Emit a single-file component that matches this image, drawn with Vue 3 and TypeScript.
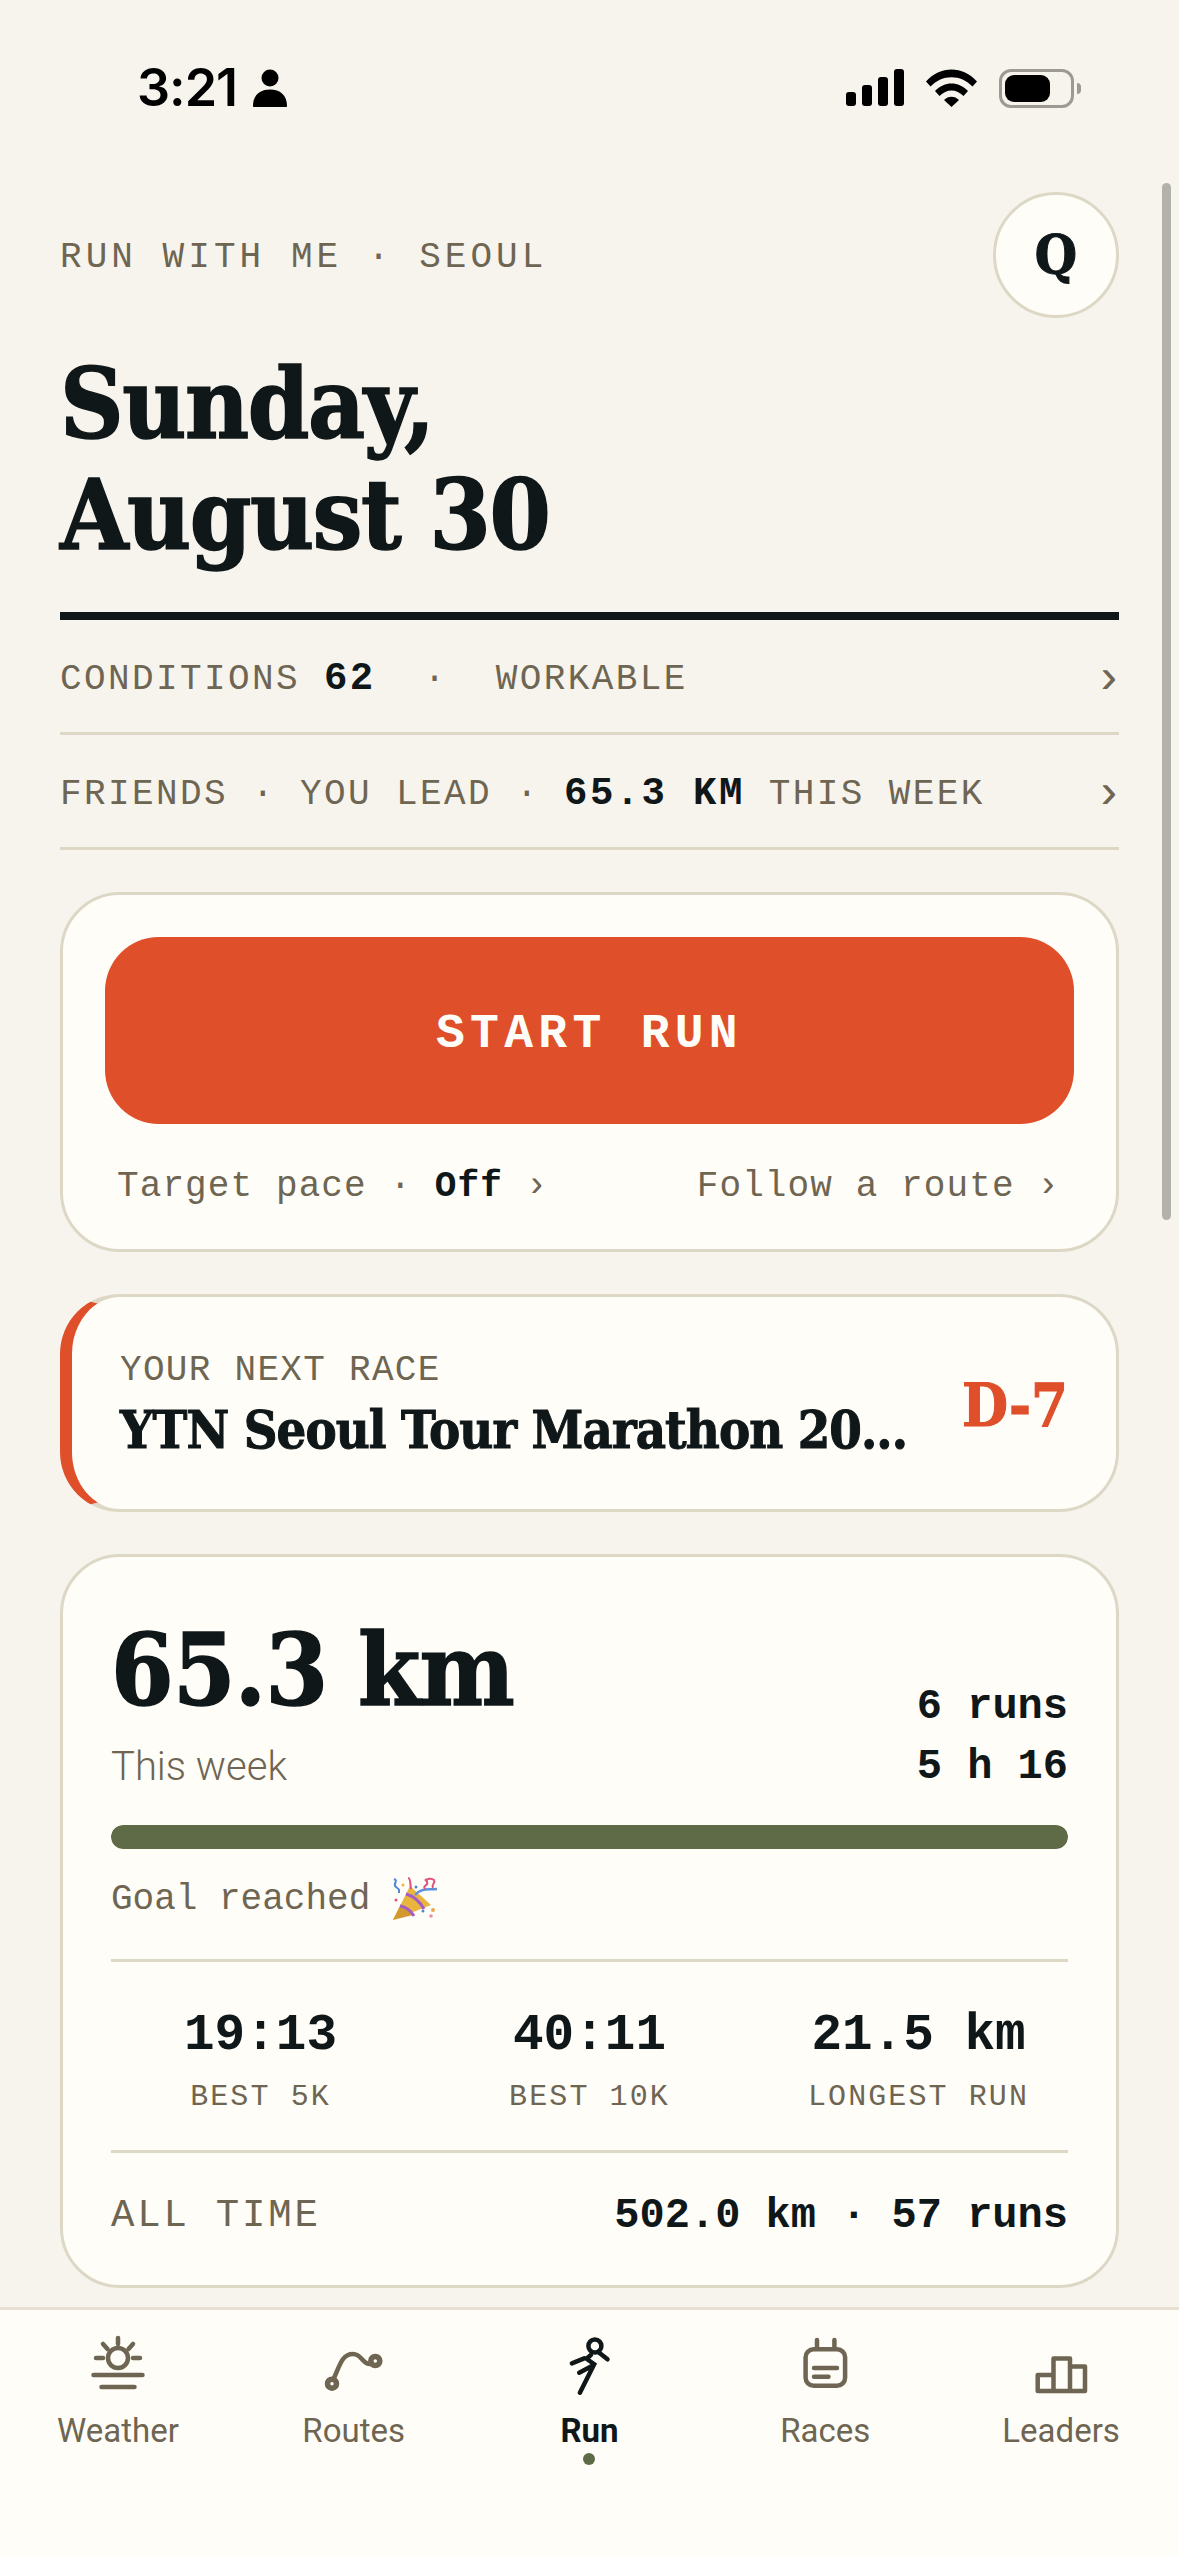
<template>
  <div class="app">
    <header class="status-bar">
      <div class="status-bar__left">
        <span class="status-bar__time">3:21</span>
        <svg class="status-bar__person" width="34" height="38" viewBox="0 0 34 38">
          <circle cx="17" cy="9" r="8.5" fill="#000" />
          <path d="M0 37c0-11 7-16.500 17-16.500S34 26 34 37c0 .6-.4 1-1 1H1c-.6 0-1-.4-1-1z" fill="#000" />
        </svg>
      </div>
      <div class="status-bar__right">
        <svg width="58" height="38" viewBox="0 0 58 38">
          <rect x="0" y="23" width="10" height="14" rx="3" fill="#000" />
          <rect x="16" y="16" width="10" height="21" rx="3" fill="#000" />
          <rect x="32" y="8" width="10" height="29" rx="3" fill="#000" />
          <rect x="48" y="0" width="10" height="37" rx="3" fill="#000" />
        </svg>
        <svg class="status-bar__wifi" width="51" height="38" viewBox="0 0 51 38">
          <path d="M0 12.500C14-3.500 37-3.500 51 12.500l-4.500 5C35 5 16 5 4.500 17.500z" fill="#000" />
          <path d="M9 22c9.500-10 23.500-10 33 0l-4.500 5c-7-7.500-17-7.500-24 0z" fill="#000" />
          <path d="M18 31c4-4.500 11-4.500 15 0l-7.500 7z" fill="#000" />
        </svg>
        <div class="battery">
          <div class="battery__shell"><div class="battery__level" /></div>
          <div class="battery__nub" />
        </div>
      </div>
    </header>

    <main class="content">
      <div class="topline">
        <span class="eyebrow">RUN WITH ME · SEOUL</span>
        <div class="avatar serif">Q</div>
      </div>

      <h1 class="title serif">Sunday,<br />August 30</h1>

      <div class="rows">
        <div class="row">
          <span class="row__text">CONDITIONS <b>62</b>&nbsp;&nbsp;·&nbsp;&nbsp;WORKABLE</span>
          <span class="row__chev">›</span>
        </div>
        <div class="row">
          <span class="row__text">FRIENDS · YOU LEAD · <b>65.3 KM</b> THIS WEEK</span>
          <span class="row__chev">›</span>
        </div>
      </div>

      <section class="card card--start">
        <button class="start-btn">START RUN</button>
        <div class="start-links">
          <span>Target pace · <b>Off</b> ›</span>
          <span>Follow a route ›</span>
        </div>
      </section>

      <section class="card card--race">
        <div class="race__body">
          <div class="race__label">YOUR NEXT RACE</div>
          <div class="race__name serif">YTN Seoul Tour Marathon 20...</div>
        </div>
        <div class="race__days serif">D-7</div>
      </section>

      <section class="card card--stats">
        <div class="week">
          <div>
            <div class="week__km serif">65.3 km</div>
            <div class="week__label">This week</div>
          </div>
          <div class="week__side">
            <div>6 runs</div>
            <div>5 h 16</div>
          </div>
        </div>

        <div class="bar"><div class="bar__fill" :style="{ width: goalPct + '%' }" /></div>
        <div class="goal">
          <span>Goal reached</span>
          <svg class="goal__icon" width="48" height="46" viewBox="12 12 48 46">
            <path d="M14 56l17-34 21 19z" fill="#e9b53f" />
            <path d="M14 56l8-16 12 11z" fill="#d29a2e" />
            <path d="M21 42c6 1 11 5 14 10M27 30c7 2 14 8 18 15" fill="none" stroke="#a45cc4" stroke-width="3" />
            <path d="M36 31c6-7 12-5 22-6" fill="none" stroke="#5b92dc" stroke-width="2.500" />
            <path d="M15 15c5 2-2 5 2 8s3 3 3 6" fill="none" stroke="#4f86d6" stroke-width="2" />
            <path d="M29 14c3 0 2 6 3 11M46 25c-3-4 4-3 2-7s5-4 7-2c2 3-3 4-1 8" fill="none" stroke="#e0527f" stroke-width="2" />
            <circle cx="24" cy="21" r="1.500" fill="#e9b53f" />
            <circle cx="37" cy="23" r="1.500" fill="#4f86d6" />
            <circle cx="17" cy="36" r="1.500" fill="#e0527f" />
            <circle cx="44" cy="47" r="1.500" fill="#4f86d6" />
            <circle cx="54" cy="46" r="2" fill="#e9a84f" />
            <circle cx="52" cy="52" r="1.800" fill="#eb8fa8" />
            <circle cx="47" cy="16" r="1.500" fill="#e0527f" />
          </svg>
        </div>

        <div class="bests">
          <div v-for="item in bests" :key="item.label" class="best">
            <div class="best__value">{{ item.value }}</div>
            <div class="best__label">{{ item.label }}</div>
          </div>
        </div>

        <div class="alltime">
          <span class="alltime__label">ALL TIME</span>
          <span class="alltime__value">502.0 km · 57 runs</span>
        </div>
      </section>

      <div class="scrollbar" />
    </main>

    <nav class="tabs">
      <div class="tab">
        <svg class="tab__icon" width="72" height="72" viewBox="0 0 72 72">
          <circle cx="36" cy="27" r="10" />
          <path d="M36 7v6M14 27h7M51 27h7M21 13l4.500 5M51 13l-4.500 5M11.500 44h49M19.500 56h33" />
        </svg>
        <span>Weather</span>
      </div>
      <div class="tab">
        <svg class="tab__icon" width="72" height="72" viewBox="0 0 72 72">
          <circle cx="14" cy="52.700" r="4.500" stroke-width="5.500" />
          <circle cx="57.300" cy="30" r="4.500" stroke-width="5.500" />
          <path d="M16 47C22 34 24 23 35 23C44 23 44 33 52 33" />
        </svg>
        <span>Routes</span>
      </div>
      <div class="tab tab--active">
        <svg class="tab__icon" width="72" height="72" viewBox="0 0 72 72">
          <circle cx="41.900" cy="15" r="6.500" />
          <path d="M46.200 21.700L54.500 28.300M37.900 24L33.500 27.700L41.200 33.300L26.900 61.700M18.900 32.300L31.200 27.300M26.200 41.700L38.900 35" />
        </svg>
        <span>Run</span>
        <i class="tab__dot" />
      </div>
      <div class="tab">
        <svg class="tab__icon" width="72" height="72" viewBox="0 0 72 72">
          <rect x="16.600" y="18.200" width="39.500" height="36.500" rx="8" />
          <path d="M28 9v7M45.400 9v7M25 37h23M25 45.700h14.500" />
        </svg>
        <span>Races</span>
      </div>
      <div class="tab">
        <svg class="tab__icon" width="72" height="72" viewBox="0 0 72 72">
          <path d="M12.700 44H28.500V27.500H45V35.500H60V60H12.700ZM28.500 44V60M45 35.500V60" stroke-linejoin="round" stroke-linecap="butt" />
        </svg>
        <span>Leaders</span>
      </div>
    </nav>
  </div>
</template>

<script setup lang="ts">
const goalPct = 100

const bests = [
  { value: '19:13', label: 'BEST 5K' },
  { value: '40:11', label: 'BEST 10K' },
  { value: '21.5 km', label: 'LONGEST RUN' }
]
</script>

<style>
html,
body {
  margin: 0;
  background: #f7f4ee;
}
</style>

<style scoped>
.app {
  width: 1179px;
  height: 2556px;
  display: flex;
  flex-direction: column;
  overflow: hidden;
  background: #f7f4ee;
  color: #0f1719;
  font-family: 'Liberation Mono', monospace;
}
.serif {
  font-family: 'DejaVu Serif', serif;
  font-stretch: condensed;
  font-weight: 700;
  -webkit-text-stroke: 1px currentColor;
}

.status-bar {
  height: 88px;
  padding: 44px 98px 0 137px;
  display: flex;
  align-items: center;
  justify-content: space-between;
  flex-shrink: 0;
}
.status-bar__left,
.status-bar__right {
  display: flex;
  align-items: center;
}
.status-bar__time {
  font-family: Inter, sans-serif;
  font-size: 52px;
  font-weight: 600;
  letter-spacing: -1px;
  color: #000;
  line-height: 1;
}
.status-bar__person {
  margin-left: 16px;
}
.status-bar__wifi {
  margin-left: 22px;
}
.battery {
  margin-left: 22px;
  display: flex;
  align-items: center;
}
.battery__shell {
  width: 75px;
  height: 39px;
  box-sizing: border-box;
  border: 3px solid #9b9a93;
  border-radius: 12px;
  padding: 3px;
}
.battery__level {
  width: 45px;
  height: 100%;
  background: #000;
  border-radius: 9px;
}
.battery__nub {
  width: 4px;
  height: 11px;
  margin-left: 3px;
  background: #9b9a93;
  border-radius: 0 4px 4px 0;
}

.content {
  position: relative;
  flex: 1;
  min-height: 0;
  padding: 60px 60px 0;
}
.topline {
  display: flex;
  align-items: center;
  justify-content: space-between;
}
.eyebrow {
  margin-top: 5px;
  font-size: 36px;
  letter-spacing: 4.05px;
  color: #6e6552;
}
.avatar {
  width: 126px;
  height: 126px;
  box-sizing: border-box;
  border: 3px solid #ddd8c6;
  border-radius: 50%;
  background: #fffdf8;
  display: flex;
  align-items: center;
  justify-content: center;
  font-size: 54px;
}

.title {
  margin: 30px 0 0;
  font-size: 98px;
  line-height: 111px;
  letter-spacing: -1.4px;
  -webkit-text-stroke-width: 1.5px;
}

.rows {
  margin-top: 42px;
  border-top: 8px solid #0f1719;
}
.row {
  height: 115px;
  padding-top: 5px;
  box-sizing: border-box;
  border-bottom: 3px solid #ddd8c6;
  display: flex;
  align-items: center;
  justify-content: space-between;
  font-size: 36px;
  color: #6e6552;
}
.row__text {
  letter-spacing: 2.4px;
  white-space: nowrap;
}
.row__text b {
  font-size: 39px;
  color: #0f1719;
}
.row__chev {
  margin-right: -4px;
  font-size: 48px;
  line-height: 1;
}

.card {
  box-sizing: border-box;
  background: #fffdf8;
  border: 3px solid #ddd8c6;
  border-radius: 60px;
}
.card--start {
  margin-top: 42px;
  padding: 42px 42px 40px;
}
.start-btn {
  display: block;
  width: 100%;
  height: 187px;
  padding: 6px 0 0;
  border: 0;
  border-radius: 54px;
  background: #de4f2a;
  color: #fffdf8;
  font-family: inherit;
  font-size: 48px;
  font-weight: 700;
  letter-spacing: 5.3px;
}
.start-links {
  height: 45px;
  margin-top: 40px;
  padding: 0 14px 0 12px;
  display: flex;
  align-items: center;
  justify-content: space-between;
  font-size: 36px;
  letter-spacing: 1.1px;
  color: #6e6552;
}
.start-links b {
  color: #0f1719;
}

.card--race {
  margin-top: 42px;
  height: 218px;
  padding: 4px 48px 0;
  border-left: 12px solid #de4f2a;
  display: flex;
  align-items: center;
  justify-content: space-between;
}
.race__label {
  font-size: 36px;
  letter-spacing: 1.3px;
  color: #6e6552;
}
.race__name {
  margin-top: 8px;
  font-size: 52px;
  letter-spacing: -0.9px;
  white-space: nowrap;
}
.race__days {
  font-size: 59px;
  color: #de4f2a;
}

.card--stats {
  margin-top: 42px;
  height: 734px;
  padding: 53px 48px 0;
}
.week {
  display: flex;
  align-items: flex-end;
  justify-content: space-between;
}
.week__km {
  font-size: 100px;
  line-height: 120px;
  letter-spacing: -0.7px;
  -webkit-text-stroke-width: 1.5px;
}
.week__label {
  margin-top: 13px;
  font-family: Roboto, sans-serif;
  font-weight: 300;
  font-size: 40px;
  line-height: 48px;
  color: #6e6552;
}
.week__side {
  margin-bottom: -6px;
  font-size: 42px;
  font-weight: 700;
  line-height: 60px;
  text-align: right;
}
.bar {
  margin-top: 34px;
  height: 24px;
  border-radius: 12px;
  overflow: hidden;
  background: #ece7da;
}
.bar__fill {
  height: 100%;
  background: #5f6b47;
  border-radius: 12px;
}
.goal {
  margin-top: 27px;
  display: flex;
  align-items: center;
  height: 46px;
  font-size: 36px;
  color: #6e6552;
}
.goal__icon {
  margin-left: 21px;
}
.bests {
  margin-top: 37px;
  padding: 44px 0 33px;
  border-top: 3px solid #ddd8c6;
  border-bottom: 3px solid #ddd8c6;
  display: grid;
  grid-template-columns: repeat(3, 1fr);
  column-gap: 30px;
  text-align: center;
}
.best__value {
  font-size: 51px;
  font-weight: 700;
  line-height: 60px;
}
.best__label {
  margin-top: 11px;
  font-size: 30px;
  letter-spacing: 2.1px;
  line-height: 40px;
  color: #6e6552;
}
.alltime {
  height: 125px;
  box-sizing: border-box;
  display: flex;
  align-items: center;
  justify-content: space-between;
}
.alltime__label {
  font-size: 39px;
  letter-spacing: 2.8px;
  color: #6e6552;
}
.alltime__value {
  font-size: 42px;
  font-weight: 700;
}

.scrollbar {
  position: absolute;
  top: 51px;
  right: 8px;
  width: 9px;
  height: 1037px;
  border-radius: 5px;
  background: #b3b2aa;
}

.tabs {
  flex-shrink: 0;
  height: 249px;
  box-sizing: border-box;
  border-top: 3px solid #e6e1d3;
  background: #fffdf8;
  display: grid;
  grid-template-columns: repeat(5, 1fr);
  font-family: Roboto, sans-serif;
  font-size: 33px;
  color: #6e6552;
}
.tab {
  padding-top: 21px;
  display: flex;
  flex-direction: column;
  align-items: center;
}
.tab__icon {
  fill: none;
  stroke: currentColor;
  stroke-width: 4.5;
  stroke-linecap: round;
  margin-bottom: 6px;
}
.tab span {
  line-height: 44px;
}
.tab--active {
  color: #0f1719;
  font-weight: 700;
}
.tab__dot {
  width: 12px;
  height: 12px;
  margin-top: 0;
  border-radius: 50%;
  background: #5f6b47;
}
</style>
